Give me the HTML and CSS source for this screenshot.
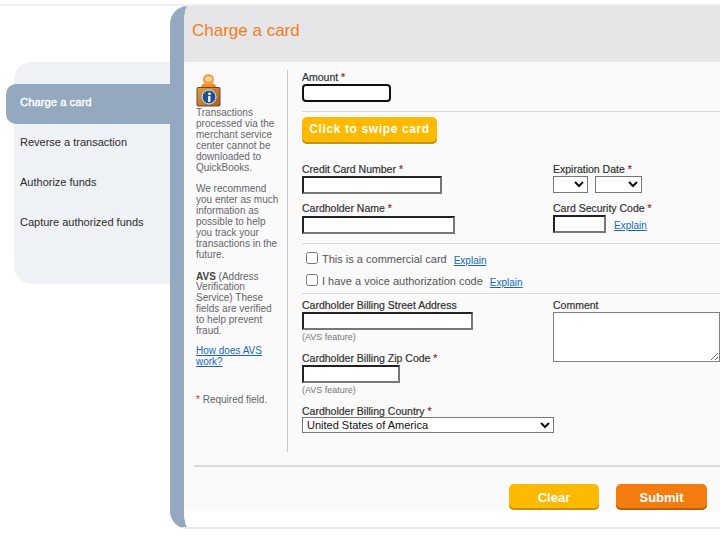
FILE: index.html
```html
<!DOCTYPE html>
<html lang="en">
<head>
<meta charset="utf-8">
<title>Charge a card</title>
<link rel="stylesheet" href="styles.css">
</head>
<body>
<div class="page">
  <aside class="side">
    <nav class="nav">
      <a class="nav-item active">Charge a card</a>
      <a class="nav-item">Reverse a transaction</a>
      <a class="nav-item">Authorize funds</a>
      <a class="nav-item">Capture authorized funds</a>
    </nav>
  </aside>
  <main class="panel">
    <header class="head"><h1>Charge a card</h1></header>
    <div class="content">
      <div class="columns">
        <section class="help">
          <svg class="help-icon" width="25" height="34" viewBox="0 0 25 34">
            <defs>
              <linearGradient id="box" x1="0" y1="0" x2="1" y2="1">
                <stop offset="0" stop-color="#d9a24a"/>
                <stop offset="1" stop-color="#a85a22"/>
              </linearGradient>
            </defs>
            <path d="M5 14c0-3 3-4 7.500-4s7.500 1 7.500 4v1H5z" fill="#f08a2c"/>
            <circle cx="12.500" cy="6.500" r="5.500" fill="#f4a040"/>
            <ellipse cx="12.500" cy="6" rx="3.500" ry="2.500" fill="#fbd9a0"/>
            <rect x="1" y="14.500" width="23" height="18.500" rx="1" fill="url(#box)" stroke="#6e4a26"/>
            <circle cx="13" cy="24" r="7" fill="#1f4f95" stroke="#e7eef7"/>
            <rect x="12.200" y="23" width="2.200" height="6" fill="#fff"/>
            <circle cx="13.500" cy="20.800" r="1.400" fill="#fff"/>
          </svg>
          <p>Transactions processed via the merchant service center cannot be downloaded to QuickBooks.</p>
          <p>We recommend you enter as much information as possible to help you track your transactions in the future.</p>
          <p class="avs-note"><b class="avs">AVS</b> (Address Verification Service) These fields are verified to help prevent fraud.</p>
          <p><a class="link link-help">How does AVS work?</a></p>
          <p class="required"><span class="star">*</span> Required field.</p>
        </section>
        <form class="form">
          <label class="label">Amount <span class="star">*</span></label>
          <input class="input focus w-amount">
          <hr class="rule rule-amount">
          <button type="button" class="btn btn-swipe">Click to swipe card</button>
          <div class="split split-card">
            <div class="col-left">
              <label class="label">Credit Card Number <span class="star">*</span></label>
              <input class="input w-card">
              <label class="label label-next">Cardholder Name <span class="star">*</span></label>
              <input class="input w-name">
            </div>
            <div class="col-right">
              <label class="label">Expiration Date <span class="star">*</span></label>
              <div class="exp">
                <select class="sel w-month"><option></option></select>
                <select class="sel w-year"><option></option></select>
              </div>
              <label class="label label-code">Card Security Code <span class="star">*</span></label>
              <div class="code-row"><input class="input w-code"><a class="link">Explain</a></div>
            </div>
          </div>
          <hr class="rule rule-card">
          <div class="check"><input type="checkbox" class="box"><span>This is a commercial card</span><a class="link">Explain</a></div>
          <div class="check check-2"><input type="checkbox" class="box"><span>I have a voice authorization code</span><a class="link">Explain</a></div>
          <hr class="rule rule-check">
          <div class="split">
            <div class="col-left">
              <label class="label">Cardholder Billing Street Address</label>
              <input class="input w-street">
              <div class="hint">(AVS feature)</div>
              <label class="label label-zip">Cardholder Billing Zip Code <span class="star">*</span></label>
              <input class="input w-zip">
              <div class="hint">(AVS feature)</div>
            </div>
            <div class="col-right">
              <label class="label">Comment</label>
              <textarea class="area"></textarea>
            </div>
          </div>
          <label class="label label-country">Cardholder Billing Country <span class="star">*</span></label>
          <select class="sel w-country"><option>United States of America</option></select>
        </form>
      </div>
      <hr class="rule rule-foot">
      <div class="actions">
        <button type="button" class="btn btn-clear">Clear</button>
        <button type="button" class="btn btn-submit">Submit</button>
      </div>
    </div>
    <div class="tail"></div>
  </main>
</div>
</body>
</html>
```
FILE: styles.css
```css
* { box-sizing: border-box; }
html, body { margin: 0; height: 100%; background: #fff; overflow: hidden; }
body { font-family: "Liberation Sans", Arial, sans-serif; color: #333; border-top: 2px solid #f0f0f2; margin-top: 4px; width: 720px; height: 537px; }
.page { display: flex; height: 523px; }

.side { width: 170px; flex: none; padding: 56px 0 0 6px; }
.nav { display: flex; flex-direction: column; margin-left: 8px; height: 222px; background: #eef1f5; border-radius: 18px 0 0 18px; padding-top: 22px; }
.nav-item { display: flex; align-items: center; height: 40px; margin-left: 6px; padding-bottom: 4px; font-size: 11px; color: #2c2c2c; }
.active { margin-left: -8px; padding-left: 14px; background: #94a9bf; color: #fff; font-size: 11.300px; border-radius: 10px 0 0 10px; -webkit-text-stroke: .35px #fff; }

.panel { flex: 1; min-width: 0; display: flex; flex-direction: column; border-left: 14px solid #94a9bf; border-radius: 18px 0 0 18px; overflow: hidden; border-bottom: 2px solid #e4e8ee; }
.head { height: 56px; flex: none; background: #e6e6e8; padding: 14px 0 0 8px; }
.head h1 { margin: 0; font-size: 17px; line-height: 22px; font-weight: normal; color: #f47d20; }
.content { background: #fafafa; height: 449px; flex: none; overflow: hidden; }
.tail { flex: 1; background: #fff; }
.columns { display: flex; height: 390px; padding-top: 8px; }

.help { width: 103px; flex: none; padding: 3px 0 0 12px; font-size: 10px; line-height: 10.900px; color: #66666a; }
.help-icon { display: block; margin-bottom: 1px; }
.help p { margin: 0 7px 10.900px 0; }
.help .avs-note { margin-bottom: 9px; }
.avs { color: #444; }
.link-help { font-size: 10px; }
.help .required { margin-top: 27px; }
.form { flex: 1; min-width: 0; border-left: 1px solid #c8c8c8; padding: 1px 0 0 14px; }
.star { color: #e8222a; }
.label { display: block; font-size: 10.500px; line-height: 13px; color: #333; -webkit-text-stroke: .2px #333; }
.input { display: block; height: 18px; padding: 0 2px; background: #fff; border: 2px solid; border-color: #222 #777 #777 #222; border-radius: 0; outline: 0; font: 11px "Liberation Sans", sans-serif; }
.focus { border: 2px solid #111; border-radius: 4px; }
.w-amount { width: 89px; }
.rule { border: 0; height: 1px; background: #d8d8d8; margin: 0; }
.rule-amount { margin: 9px 0 5px; }
.btn { display: block; border: 0; border-radius: 5px; padding: 0; font: bold 13px "Liberation Sans", sans-serif; color: #fff; white-space: nowrap; }
.btn-swipe { width: 135px; height: 27px; padding-bottom: 3px; background: #ffba00; font-size: 12px; letter-spacing: .63px; box-shadow: inset 0 -2px 0 #c98f10; }
.split { display: flex; }
.split-card { margin-top: 19px; }
.col-left { width: 251px; flex: none; }
.col-right { flex: 1; min-width: 0; }
.w-card { width: 140px; }
.label-next { margin-top: 8px; }
.w-name { width: 153px; margin-top: 1px; }
.sel { display: block; height: 17px; background: #fff; border: 1px solid #767676; border-radius: 0; font: 11px "Liberation Sans", sans-serif; color: #111; padding: 0; }
.exp { display: flex; gap: 7px; }
.w-month { width: 35px; }
.w-year { width: 47px; }
.label-code { margin-top: 9px; }
.code-row { display: flex; align-items: center; gap: 8px; }
.code-row .link { margin-top: 2px; }
.w-code { width: 53px; }
.link { color: #1668bd; text-decoration: underline; font-size: 10px; }
.rule-card { margin: 9px 0 8px; }
.check { display: flex; align-items: center; height: 14px; font-size: 11px; color: #555; }
.check-2 { margin-top: 8px; }
.box { width: 12px; height: 12px; margin: 0 4px 0 4px; appearance: none; -webkit-appearance: none; background: #fff; border: 1px solid #767676; border-radius: 2.500px; position: relative; top: -1px; }
.check .link { margin: 2px 0 0 7px; }
.rule-check { margin: 5px 0 5px; }
.w-street { width: 171px; }
.hint { font-size: 9px; line-height: 11px; margin-top: 2px; color: #777; }
.label-zip { margin-top: 9px; }
.w-zip { width: 98px; }
.area { display: block; width: 167px; height: 50px; background: #fff; border: 1px solid #808080; border-radius: 0; padding: 0; }
.label-country { margin-top: 9px; }
.w-country { width: 252px; height: 16px; margin-top: -1px; }
.rule-foot { margin: 13px 0 0 10px; height: 2px; background: #dcdcdc; }
.actions { display: flex; justify-content: flex-end; gap: 17px; padding: 17px 13px 0 0; }
.btn-clear { width: 90px; height: 26px; background: #ffba00; box-shadow: inset 0 -2px 0 #c98f10; }
.btn-submit { width: 91px; height: 26px; background: #f57d10; box-shadow: inset 0 -2px 0 #b8600e; }
```
